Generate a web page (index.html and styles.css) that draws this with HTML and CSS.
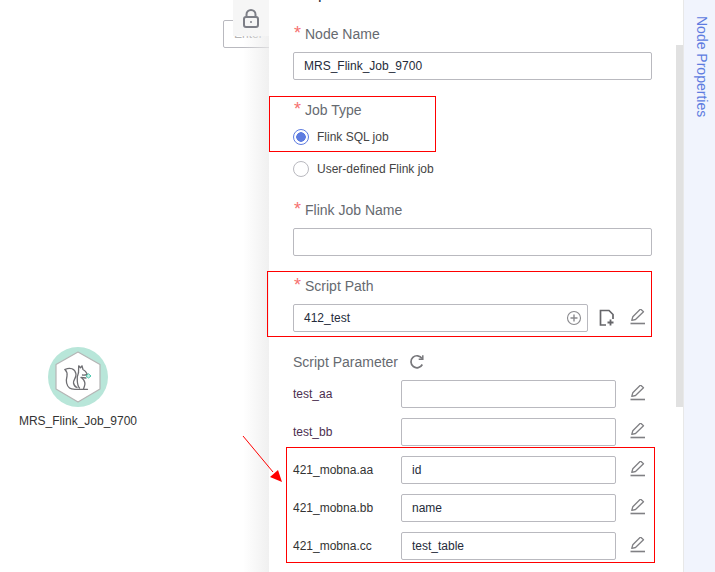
FILE: index.html
```html
<!DOCTYPE html>
<html lang="en">
<head>
<meta charset="utf-8">
<title>Node Properties</title>
<link rel="stylesheet" href="styles.css">
</head>
<body>
<div class="app">
  <main class="canvas">
    <div class="enter-box">Enter</div>
    <div class="lock-tab">
      <svg width="18" height="20" viewBox="0 0 18 20" fill="none" stroke="#7d7f87" stroke-width="2"><path d="M4.500 8V5.500a4.500 4.500 0 0 1 9 0V8"/><rect x="2" y="8" width="14" height="10" rx="2"/><circle cx="9" cy="13" r="1" fill="#7d7f87" stroke="none"/></svg>
    </div>
    <div class="node">
      <div class="node-ring">
        <svg width="60" height="60" viewBox="0 0 60 60">
          <path d="M30 5 L52 17.500 V42 L30 55 L8 42 V17.500 Z" fill="#fff" stroke="#b5b5b5" stroke-width="1.200" stroke-linejoin="round"/>
          <g fill="none" stroke="#6e6e72" stroke-width="1.300" stroke-linecap="round" stroke-linejoin="round">
            <path d="M17 22.500 C22 20 27 21.500 28 27 C28.500 31 25 33 25.500 36 C26 38.500 27.500 40 29 40.500"/>
            <path d="M17 22.500 C19 24.500 19.500 26 19 29 C18 33 18 38 21.500 41 C23 42.300 25 42.300 27 42.300 H39.500"/>
            <path d="M30.500 25.500 L30.700 18.800 L32.500 20.800 L34 18.800 L35 22.500 C37 23.500 38.500 25.500 39.300 27.300 C37.500 28 36 28.300 34.500 28"/>
            <path d="M30.500 25.500 C29.500 28 29 31 29.300 34 C29.500 37 30 39.500 31.500 41"/>
            <path d="M34 31 C36.500 33.500 37.500 36.500 36.500 39 L35.500 42"/>
            <path d="M33 30.500 L38 31"/>
          </g>
          <path d="M38 29 L40.500 26.800 L43 29 L40.500 31 Z" fill="#c9efe6" stroke="#47c8ad" stroke-width="1"/>
        </svg>
      </div>
      <div class="node-name">MRS_Flink_Job_9700</div>
    </div>
    <svg class="arrow" width="50" height="58" viewBox="0 0 50 58">
      <line x1="1" y1="1" x2="31" y2="37" stroke="#f00" stroke-width="1"/>
      <path d="M40 47 L36 35 L28 42 Z" fill="#f00"/>
    </svg>
  </main>

  <section class="panel">
    <div class="scrollbar"></div>
    <form class="form">
      <div class="title">Properties</div>
      <div class="label first"><span class="req">*</span>Node Name</div>
      <input class="field wide" value="MRS_Flink_Job_9700">

      <div class="label job"><span class="req">*</span>Job Type</div>
      <div class="radio-row on"><span class="radio"></span>Flink SQL job</div>
      <div class="radio-row"><span class="radio"></span>User-defined Flink job</div>

      <div class="label flink"><span class="req">*</span>Flink Job Name</div>
      <input class="field wide">

      <div class="label script"><span class="req">*</span>Script Path</div>
      <div class="path-row">
        <div class="field path">412_test
          <svg class="plus" width="16" height="16" viewBox="0 0 16 16" fill="none" stroke="#8a8a8e"><circle cx="8" cy="8" r="6.500" stroke-width="1.100"/><path d="M8 4.500v7M4.500 8h7" stroke-width="1.400"/></svg>
        </div>
        <svg class="ico" width="16" height="18" viewBox="0 0 16 18" fill="none" stroke="#66666a" stroke-width="1.700"><path d="M7 16H1.500V1.500H10L14 5.500V10"/><path d="M11.500 10.500v6M8.500 13.500h6" stroke-width="1.800"/></svg>
        <svg class="ico edit" width="16" height="18" viewBox="0 0 16 18"><use href="#pen"/></svg>
      </div>

      <div class="label param-title">Script Parameter
        <svg width="16" height="16" viewBox="0 0 16 16" fill="none" stroke="#77777b" stroke-width="1.700"><path d="M13.300 10.500A6 6 0 1 1 13 4.500"/><path d="M13.800 1.200V5.300H9.700" stroke-width="1.500"/></svg>
      </div>
      <div class="param"><span class="pname dark">test_aa</span><input class="field pinput"><svg class="ico" width="16" height="18" viewBox="0 0 16 18"><use href="#pen"/></svg></div>
      <div class="param"><span class="pname dark">test_bb</span><input class="field pinput"><svg class="ico" width="16" height="18" viewBox="0 0 16 18"><use href="#pen"/></svg></div>
      <div class="param"><span class="pname">421_mobna.aa</span><input class="field pinput" value="id"><svg class="ico" width="16" height="18" viewBox="0 0 16 18"><use href="#pen"/></svg></div>
      <div class="param"><span class="pname">421_mobna.bb</span><input class="field pinput" value="name"><svg class="ico" width="16" height="18" viewBox="0 0 16 18"><use href="#pen"/></svg></div>
      <div class="param"><span class="pname">421_mobna.cc</span><input class="field pinput" value="test_table"><svg class="ico" width="16" height="18" viewBox="0 0 16 18"><use href="#pen"/></svg></div>
    </form>
    <div class="mark mark-job"></div>
    <div class="mark mark-path"></div>
    <div class="mark mark-params"></div>
  </section>

  <aside class="strip"><span class="strip-text">Node Properties</span></aside>
</div>
<svg width="0" height="0" class="defs">
  <symbol id="pen" viewBox="0 0 16 18">
    <path d="M2.800 11.300 L3.800 7.800 L11.500 0 L14.500 2.800 L6.500 10.500 Z" fill="none" stroke="#808084" stroke-width="1.300" stroke-linejoin="round"/>
    <path d="M1.500 14.500h14.500" stroke="#808084" stroke-width="1.600"/>
  </symbol>
</svg>
</body>
</html>
```
FILE: styles.css
```css
* { box-sizing: border-box; }
html, body { margin: 0; height: 100%; overflow: hidden; background: #fff; }
body { font-family: "Liberation Sans", Arial, sans-serif; }
.app { display: flex; width: 715px; height: 572px; position: relative; overflow: hidden; }
.canvas { width: 269px; flex: none; position: relative; background: #fff; }
.canvas::after { content: ""; position: absolute; right: 0; top: 0; bottom: 0; width: 26px; background: linear-gradient(to right, rgba(235,235,235,0), rgba(235,235,235,.75)); }
.enter-box { position: absolute; left: 223px; top: 20px; width: 60px; height: 28px; border: 1px solid #b9b9bf; border-radius: 2px; padding-left: 10px; line-height: 26px; font-size: 12px; color: #b4b4b4; }
.lock-tab { position: absolute; left: 233px; top: 0; width: 36px; height: 36px; background: #f6f6f6; display: flex; justify-content: center; padding-top: 9px; z-index: 1; }
.node { position: absolute; left: 8px; top: 347px; width: 140px; display: flex; flex-direction: column; align-items: center; }
.node-ring { width: 60px; height: 60px; border-radius: 50%; background: #b8e6d9; }
.node-ring svg { display: block; }
.node-name { margin-top: 6px; font-size: 12px; line-height: 16px; color: #333; white-space: nowrap; }
.arrow { position: absolute; left: 242px; top: 435px; z-index: 3; overflow: visible; }

.panel { width: 414px; flex: none; position: relative; background: #fff; }
.scrollbar { position: absolute; left: 407px; top: 45px; width: 8px; height: 362px; background: #e1e1e1; }
.form { padding: 0 0 0 24px; width: 383px; color: #333; margin-top: -16px; }
.title { height: 20px; font-size: 16px; line-height: 20px; color: #252b3a; white-space: nowrap; }
.label { font-size: 14px; line-height: 18px; color: #666a70; display: flex; align-items: center; white-space: nowrap; }
.req { color: #f6716f; font-size: 18px; width: 12px; line-height: 18px; margin-top: -2px; height: 18px; padding-left: 1px; }
.label.first { margin-top: 21px; }
.label.job { margin-top: 21px; }
.label.flink { margin-top: 23px; }
.label.script { margin-top: 21px; }
.label.param-title { margin-top: 21px; height: 18px; gap: 11px; }
.field { display: block; height: 28px; border: 1px solid #b9b9bf; border-radius: 2px; background: #fff; font: 12px "Liberation Sans", Arial, sans-serif; color: #252b3a; padding: 0 10px; outline: none; }
.wide { width: 359px; margin-top: 9px; }
.radio-row { display: flex; align-items: center; height: 18px; font-size: 12px; color: #444; }
.radio-row.on { margin-top: 9px; }
.radio-row:not(.on) { margin-top: 14px; }
.radio { width: 16px; height: 16px; border-radius: 50%; border: 1px solid #b9b9bf; margin-right: 8px; background: #fff; display: block; }
.on .radio { border-color: #5e7ce0; background: radial-gradient(circle, #5e7ce0 0 4.500px, #fff 5px); }
.path-row { display: flex; align-items: center; margin-top: 9px; height: 28px; }
.field.path { width: 295px; position: relative; display: flex; align-items: center; margin: 0; }
.plus { position: absolute; right: 5px; top: 5px; }
.ico { display: block; flex: none; margin-left: 11px; }
.ico.edit { margin-left: 14px; }
.param { display: flex; align-items: center; height: 28px; margin-top: 10px; }
.label.param-title + .param { margin-top: 9px; }
.pname { width: 108px; flex: none; font-size: 12px; color: #333; }
.pname.dark { color: #4c2f50; }
.pinput { width: 215px; }
.param .ico { margin-left: 13px; }
.mark { position: absolute; border: 1px solid #f00; pointer-events: none; z-index: 2; }
.mark-job { left: 0; top: 96px; width: 167px; height: 56px; }
.mark-path { left: -2px; top: 271px; width: 385px; height: 66px; }
.mark-params { left: 17px; top: 447px; width: 369px; height: 116px; }

.strip { width: 32px; flex: none; background: #f1f4fd; border-left: 1px solid #e8e8e8; position: relative; z-index: 1; }
.strip-text { display: block; writing-mode: vertical-rl; font-size: 14px; line-height: 16px; color: #5e7ce0; margin: 16px 0 0 10px; white-space: nowrap; }
.defs { position: absolute; }
```
